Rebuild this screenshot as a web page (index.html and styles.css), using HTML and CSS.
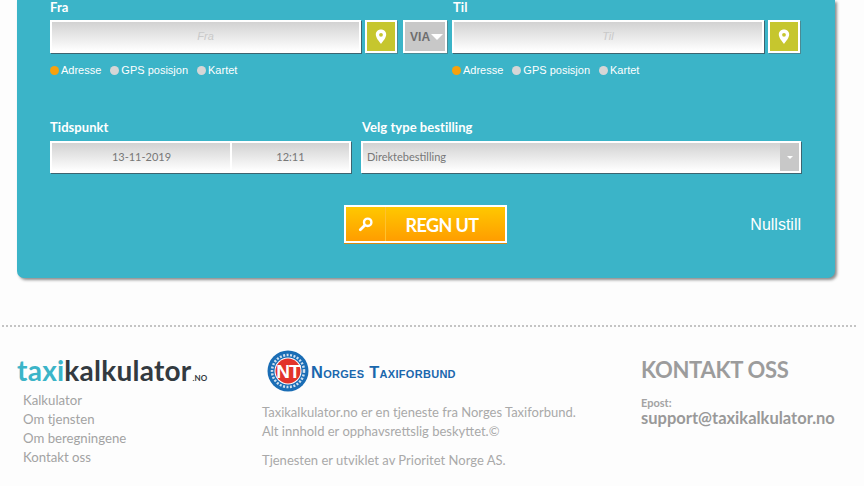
FILE: index.html
```html
<!DOCTYPE html>
<html lang="no">
<head>
<meta charset="utf-8">
<title>Taxikalkulator</title>
<link rel="stylesheet" href="styles.css">
</head>
<body>
<main class="panel">
  <div class="route">
    <div class="place">
      <label class="label">Fra</label>
      <div class="controls">
        <div class="field field-address">Fra</div>
        <button class="pin" aria-label="Kart"><svg width="12" height="16" viewBox="0 0 12 16"><path fill="#fff" fill-rule="evenodd" d="M6 0.5C2.9 0.5 0.8 2.8 0.8 5.6 0.8 9 4.4 12.8 6 15c1.6-2.2 5.2-6 5.2-9.4C11.200 2.800 9.100 0.500 6 0.500ZM6 3.900a1.900 1.900 0 1 1 0 3.800 1.900 1.900 0 0 1 0-3.800Z"/></svg></button>
        <button class="via">VIA<span class="via-arrow"></span></button>
      </div>
      <div class="radios">
        <span class="radio"><i class="dot on"></i>Adresse</span>
        <span class="radio"><i class="dot"></i>GPS posisjon</span>
        <span class="radio"><i class="dot"></i>Kartet</span>
      </div>
    </div>
    <div class="place place-to">
      <label class="label">Til</label>
      <div class="controls">
        <div class="field field-address">Til</div>
        <button class="pin" aria-label="Kart"><svg width="12" height="16" viewBox="0 0 12 16"><path fill="#fff" fill-rule="evenodd" d="M6 0.5C2.9 0.5 0.8 2.8 0.8 5.6 0.8 9 4.4 12.8 6 15c1.6-2.2 5.2-6 5.2-9.4C11.200 2.800 9.100 0.500 6 0.500ZM6 3.900a1.900 1.900 0 1 1 0 3.800 1.900 1.900 0 0 1 0-3.800Z"/></svg></button>
      </div>
      <div class="radios">
        <span class="radio"><i class="dot on"></i>Adresse</span>
        <span class="radio"><i class="dot"></i>GPS posisjon</span>
        <span class="radio"><i class="dot"></i>Kartet</span>
      </div>
    </div>
  </div>

  <div class="when">
    <div class="when-time">
      <label class="label">Tidspunkt</label>
      <div class="datetime">
        <div class="dt-date">13-11-2019</div>
        <div class="dt-time">12:11</div>
      </div>
    </div>
    <div class="when-type">
      <label class="label">Velg type bestilling</label>
      <div class="select">
        <span class="select-text">Direktebestilling</span>
        <span class="select-btn"><i class="select-arrow"></i></span>
      </div>
    </div>
  </div>

  <div class="actions">
    <button class="calc">
      <span class="calc-icon"><svg width="16" height="16" viewBox="0 0 16 16"><circle cx="9.700" cy="6.300" r="3.700" fill="none" stroke="#fff" stroke-width="2.400"/><path d="M6.800 9.200 2.300 13.700" stroke="#fff" stroke-width="2.800" stroke-linecap="round"/></svg></span>
      <span class="calc-text">REGN UT</span>
    </button>
    <a class="reset">Nullstill</a>
  </div>
</main>

<footer class="footer">
  <div class="col-links">
    <div class="logo"><span class="logo-taxi">taxi</span>kalkulator<span class="logo-no">.NO</span></div>
    <ul class="links">
      <li>Kalkulator</li>
      <li>Om tjensten</li>
      <li>Om beregningene</li>
      <li>Kontakt oss</li>
    </ul>
  </div>
  <div class="col-about">
    <div class="ntf">
      <svg class="ntf-badge" width="42" height="42" viewBox="0 0 42 42">
        <circle cx="21" cy="21" r="20.500" fill="#1a6db5"/>
        <circle cx="21" cy="21" r="16" fill="none" stroke="#cfe0f0" stroke-width="2.500" stroke-dasharray="2 1.500"/>
        <circle cx="21" cy="21" r="13.500" fill="#fff"/>
        <circle cx="21" cy="21" r="12.500" fill="#e2342b"/>
        <text x="21" y="28" text-anchor="middle" class="ntf-nt">NT</text>
      </svg>
      <span class="ntf-name">Norges Taxiforbund</span>
    </div>
    <p class="about">Taxikalkulator.no er en tjeneste fra Norges Taxiforbund.<br>Alt innhold er opphavsrettslig beskyttet.©</p>
    <p class="about about-dev">Tjenesten er utviklet av Prioritet Norge AS.</p>
  </div>
  <div class="col-contact">
    <h2 class="contact-title">KONTAKT OSS</h2>
    <div class="contact-label">Epost:</div>
    <div class="contact-mail">support@taxikalkulator.no</div>
  </div>
</footer>
</body>
</html>
```

FILE: styles.css
```css
* { box-sizing: border-box; }
html, body { margin: 0; padding: 0; }
body {
  width: 864px;
  height: 486px;
  overflow: hidden;
  background: #fdfdfd;
  font-family: Lato, "Liberation Sans", sans-serif;
}

/* Panel */
.panel {
  width: 818px;
  height: 278px;
  margin-left: 17px;
  padding-left: 33px;
  background: #3bb4c8;
  border-radius: 0 0 7px 7px;
  box-shadow: 2px 2px 3px #8c8c8c;
}
.label {
  display: block;
  height: 20px;
  padding-top: 1px;
  color: #fff;
  font-size: 13px;
  font-weight: 700;
  line-height: 13px;
  letter-spacing: 0.050px;
}
.place-to .label, .when-type .label { padding-left: 1px; }
.when .label { padding-top: 0; }

/* Route row */
.route { display: flex; gap: 5px; }
.place { width: 397px; }
.controls { display: flex; height: 33px; }
.field {
  background: linear-gradient(#d2d2d2, #fff);
  border: 2px solid #fff;
  box-shadow: 1px 1px 0 #3d6470;
}
.field-address {
  width: 312px;
  color: #c9c9c9;
  font-family: "Liberation Sans", sans-serif;
  font-style: italic;
  font-size: 11px;
  line-height: 29px;
  text-align: center;
}
.pin {
  display: flex;
  width: 32px;
  height: 33px;
  margin-left: 4px;
  padding: 0;
  align-items: center;
  justify-content: center;
  background: #c6c62e;
  border: 2px solid #fff;
  box-shadow: 1px 1px 0 #4a8a94;
}
.via {
  display: flex;
  width: 44px;
  height: 33px;
  margin-left: 6px;
  padding: 0 0 0 5px;
  align-items: center;
  background: #c8c8c8;
  border: 2px solid #fff;
  color: #6e6e6e;
  font-family: "Liberation Sans", sans-serif;
  font-size: 12px;
  font-weight: 700;
  box-shadow: 1px 1px 0 #4a8a94;
}
.via-arrow {
  width: 0;
  height: 0;
  margin-left: 1px;
  border-left: 6px solid transparent;
  border-right: 6px solid transparent;
  border-top: 6px solid #fff;
}
.radios {
  display: flex;
  gap: 9px;
  margin-top: 11px;
  height: 13px;
  color: #fff;
  font-family: "Liberation Sans", sans-serif;
  font-size: 11px;
  line-height: 13px;
}
.radio { display: flex; align-items: center; }
.dot {
  width: 9px;
  height: 9px;
  margin-right: 2px;
  border-radius: 50%;
  background: #d6d6d6;
}
.dot.on { background: #f8a10c; }

/* Time row */
.when { display: flex; margin-top: 44px; gap: 10px; }
.when-time { width: 301px; }
.when-type { width: 440px; }
.datetime {
  display: flex;
  height: 32px;
  background: linear-gradient(#d2d2d2, #fff);
  border: 2px solid #fff;
  box-shadow: 1px 1px 0 #3d6470;
  color: #777;
  font-size: 11px;
  line-height: 28px;
  text-align: center;
}
.dt-date { width: 180px; padding-left: 1px; border-right: 2px solid #fff; }
.dt-time { flex: 1; }
.select {
  display: flex;
  height: 32px;
  justify-content: space-between;
  background: linear-gradient(#d2d2d2, #fff);
  border: 2px solid #fff;
  box-shadow: 1px 1px 0 #3d6470;
  color: #777;
  font-size: 11px;
  line-height: 28px;
}
.select-text { padding-left: 4px; }
.select-btn {
  display: flex;
  width: 19px;
  height: 28px;
  align-items: center;
  justify-content: center;
  background: #c8c8c8;
}
.select-arrow {
  width: 0;
  height: 0;
  border-left: 3px solid transparent;
  border-right: 3px solid transparent;
  border-top: 3px solid #fff;
}

/* Actions */
.actions {
  display: flex;
  width: 751px;
  margin-top: 32px;
  padding-left: 294px;
  justify-content: space-between;
}
.calc {
  display: flex;
  width: 163px;
  height: 38px;
  padding: 0;
  background: linear-gradient(#ffc800, #ff9d00);
  border: 2px solid #fff;
  box-shadow: 0 1px 0 #d98b10;
  color: #fff;
  font-family: Lato, sans-serif;
}
.calc-icon {
  display: flex;
  width: 40px;
  height: 34px;
  align-items: center;
  justify-content: center;
  border-right: 1px solid #ffc22e;
}
.calc-text {
  flex: 1;
  padding-right: 7px;
  font-size: 18px;
  font-weight: 700;
  line-height: 36px;
  letter-spacing: -0.600px;
  white-space: nowrap;
}
.reset {
  margin-top: 10px;
  color: #fff;
  font-family: "Liberation Sans", sans-serif;
  font-size: 16px;
  line-height: 20px;
}

/* Footer */
.footer {
  display: grid;
  grid-template-columns: 245px 379px 1fr;
  width: 854px;
  height: 160px;
  margin: 47px 0 0 2px;
  padding: 22px 0 0 15px;
  border-top: 2px dotted #c4c4c4;
}
.logo {
  height: 31px;
  color: #333a40;
  font-size: 28px;
  font-weight: 700;
  line-height: 42px;
  letter-spacing: 0.250px;
}
.logo-taxi { color: #3bb4c8; }
.logo-no { font-size: 8px; letter-spacing: 0; margin-left: 1px; }
.links {
  margin: 0;
  padding: 11px 0 0 6px;
  list-style: none;
  color: #a3a3a3;
  font-size: 13.200px;
  line-height: 19px;
}
.ntf { display: flex; align-items: center; height: 42px; margin: 1px 0 0 5px; }
.ntf-nt {
  fill: #fff;
  font-family: "Liberation Sans", sans-serif;
  font-size: 19px;
  font-weight: 700;
  letter-spacing: -1px;
}
.ntf-name {
  margin-left: 2px;
  padding-top: 2px;
  color: #1a67ad;
  font-family: "Liberation Sans", sans-serif;
  font-size: 16.400px;
  font-weight: 700;
  font-variant: small-caps;
  letter-spacing: 0.300px;
  white-space: nowrap;
}
.about {
  margin: 11px 0 0;
  color: #a9a9a9;
  font-size: 13px;
  line-height: 19px;
}
.about-dev { margin-top: 10px; }
.contact-title {
  margin: 8px 0 0;
  color: #9c9c9c;
  font-size: 22px;
  font-weight: 700;
  line-height: 26px;
  letter-spacing: -0.300px;
}
.contact-label {
  margin-top: 14px;
  color: #a3a3a3;
  font-size: 11px;
  font-weight: 700;
  line-height: 12px;
}
.contact-mail {
  color: #999;
  font-size: 16.500px;
  font-weight: 700;
  line-height: 18px;
  white-space: nowrap;
}
```
